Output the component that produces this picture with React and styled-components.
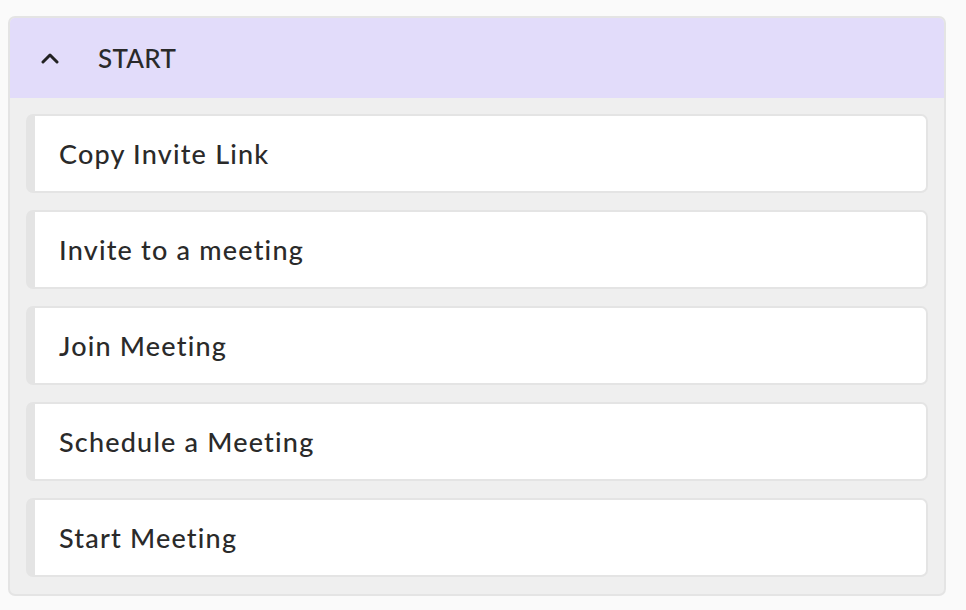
import React from 'react';
import styled, { createGlobalStyle } from 'styled-components';

const GlobalStyle = createGlobalStyle`
  body {
    margin: 0;
    background: #fafafa;
    font-family: Lato, "Open Sans", sans-serif;
  }
`;

const actions = [
  'Copy Invite Link',
  'Invite to a meeting',
  'Join Meeting',
  'Schedule a Meeting',
  'Start Meeting',
];

function App() {
  return (
    <>
      <GlobalStyle />
      <Page>
        <Panel>
          <Header>
            <Chevron viewBox="0 0 20 12" aria-hidden="true">
              <path d="M3 10 L10 3 L17 10" />
            </Chevron>
            <Title>START</Title>
          </Header>
          <List>
            {actions.map((label) => (
              <Item key={label}>{label}</Item>
            ))}
          </List>
        </Panel>
      </Page>
    </>
  );
}

const Page = styled.div`
  padding: 16px 20px 14px 8px;
`;

const Panel = styled.section`
  border: 2px solid #e4e4e4;
  border-radius: 7px;
  overflow: hidden;
  background: #efefef;
`;

const Header = styled.div`
  height: 80px;
  display: flex;
  align-items: center;
  padding-left: 30px;
  background: #e2dcfa;
`;

const Chevron = styled.svg`
  width: 20px;
  height: 12px;
  fill: none;
  stroke: #222;
  stroke-width: 3;
  stroke-linecap: round;
  stroke-linejoin: round;
  margin-right: 38px;
`;

const Title = styled.span`
  font-size: 26px;
  font-weight: 500;
  color: #2a2a2a;
  letter-spacing: 0.3px;
`;

const List = styled.div`
  display: flex;
  flex-direction: column;
  gap: 17px;
  padding: 16px 16px 17px;
`;

const Item = styled.div`
  height: 75px;
  display: flex;
  align-items: center;
  padding-left: 24px;
  background: #fff;
  border: 2px solid #e4e4e4;
  border-left-width: 9px;
  border-radius: 7px;
  font-size: 27px;
  font-weight: 500;
  letter-spacing: 1.2px;
  color: #2a2a2a;
`;

export default App;
